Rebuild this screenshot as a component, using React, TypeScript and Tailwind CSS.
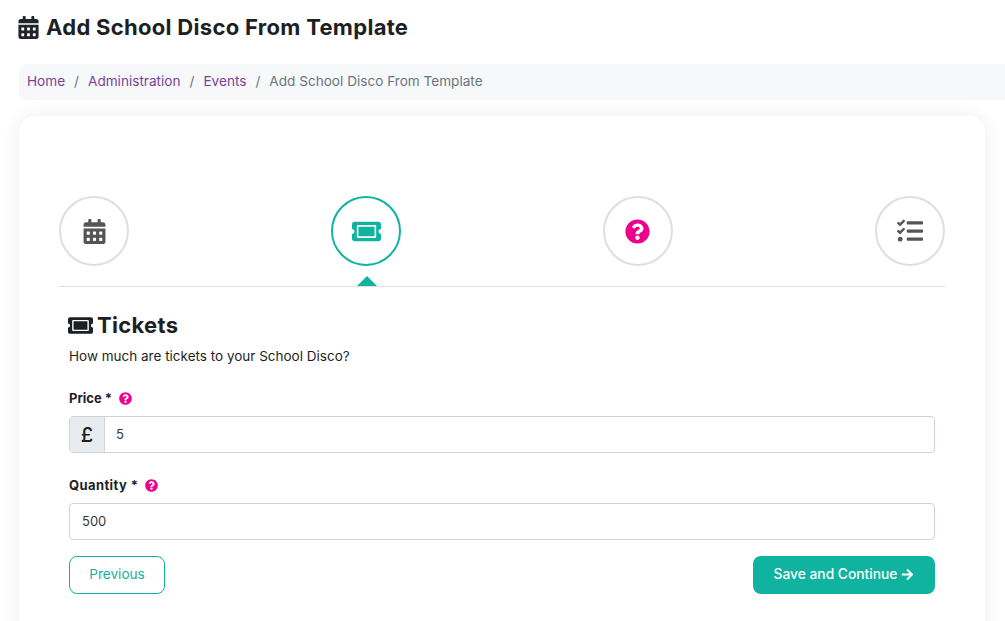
import { FaArrowRight, FaCalendarAlt, FaQuestionCircle, FaTasks, FaTicketAlt } from "react-icons/fa";

const font = { fontFamily: "Inter" };

// kleine roze vraagteken naast een label
function Help() {
  return <FaQuestionCircle className="-mt-[1px] text-[13px] text-[#ec008c]" />;
}

function Step({ active, children }: { active?: boolean; children: React.ReactNode }) {
  return (
    <div className="relative">
      <div
        className={`flex h-[70px] w-[70px] items-center justify-center rounded-full border-2 bg-white ${
          active ? "border-[#10b3a0] text-[#10b3a0]" : "border-[#dfdfdf] text-[#555555]"
        }`}
      >
        {children}
      </div>
      {active && (
        <div className="absolute left-[26px] top-[80px] h-0 w-0 border-x-[10px] border-b-[10px] border-x-transparent border-b-[#10b3a0]" />
      )}
    </div>
  );
}

export default function App() {
  return (
    <div
      className="h-[621px] overflow-hidden bg-white pl-[19px] text-[#1d1f24]"
      style={font}
    >
      <div className="flex h-[64px] items-center gap-[6px] pb-[10px] text-[22px] font-bold tracking-[0.3px]">
        <FaCalendarAlt className="-ml-[2px] text-[23px] text-[#212529]" />
        <h1>Add School Disco From Template</h1>
      </div>

      <nav className="flex h-[36px] items-center gap-[9px] rounded-l-lg bg-[#f7f8fa] pb-[1px] pl-[8px] text-[13.6px] text-[#6c757d]">
        <a className="text-[#7b3f98]">Home</a>
        <span>/</span>
        <a className="text-[#7b3f98]">Administration</a>
        <span>/</span>
        <a className="text-[#7b3f98]">Events</a>
        <span>/</span>
        <span>Add School Disco From Template</span>
      </nav>

      <div className="mt-[16px] h-[600px] w-[966px] rounded-2xl bg-white px-[40px] pt-[80px] shadow-[0_0_20px_rgba(0,0,0,0.07)]">
        <div className="flex justify-between border-b border-[#dfdfdf] pb-[20px]">
          <Step>
            <FaCalendarAlt className="text-[25px]" />
          </Step>
          <Step active>
            <FaTicketAlt className="text-[29px]" />
          </Step>
          <Step>
            <FaQuestionCircle className="-ml-[1px] text-[25px] text-[#ec008c]" />
          </Step>
          <Step>
            <FaTasks className="text-[26px]" />
          </Step>
        </div>

        <div className="px-[10px] pt-[25px]">
          <h2 className="flex h-[26px] items-center gap-[4px] text-[22px] font-bold tracking-[0.3px]">
            <FaTicketAlt className="-ml-[1px] text-[25px]" />
            Tickets
          </h2>
          <p className="mt-[6px] text-[13.5px] leading-[24px]">How much are tickets to your School Disco?</p>

          <label className="mt-[19px] flex h-[24px] items-center gap-[7px] text-[13px] font-bold">
            Price *
            <Help />
          </label>
          <div className="mt-[5px] flex h-[37px] rounded border border-[#ced4da]">
            <span className="flex w-[35px] items-center justify-center border-r border-[#ced4da] bg-[#e9ecef] text-[20px] font-medium">
              £
            </span>
            <input
              readOnly
              value="5"
              className="min-w-0 flex-1 rounded-r bg-white pl-[11px] text-[13px] text-[#343a40] outline-none"
            />
          </div>

          <label className="mt-[21px] flex h-[24px] items-center gap-[7px] text-[13px] font-bold tracking-[0.4px]">
            Quantity *
            <Help />
          </label>
          <input
            readOnly
            value="500"
            className="mt-[5px] block h-[37px] w-full rounded border border-[#ced4da] bg-white pb-[1px] pl-[12px] text-[13px] text-[#343a40] outline-none"
          />

          <div className="mt-[16px] flex justify-between">
            <button className="h-[38px] w-[96px] rounded-lg border border-[#10b3a0] pb-[1px] text-[13.6px] text-[#10b3a0]">
              Previous
            </button>
            <button className="flex h-[38px] w-[182px] items-center justify-center gap-[4px] rounded-lg bg-[#10b3a0] pb-[1px] text-[13.8px] font-medium text-white">
              Save and Continue
              <FaArrowRight className="text-[13px]" />
            </button>
          </div>
        </div>
      </div>
    </div>
  );
}
